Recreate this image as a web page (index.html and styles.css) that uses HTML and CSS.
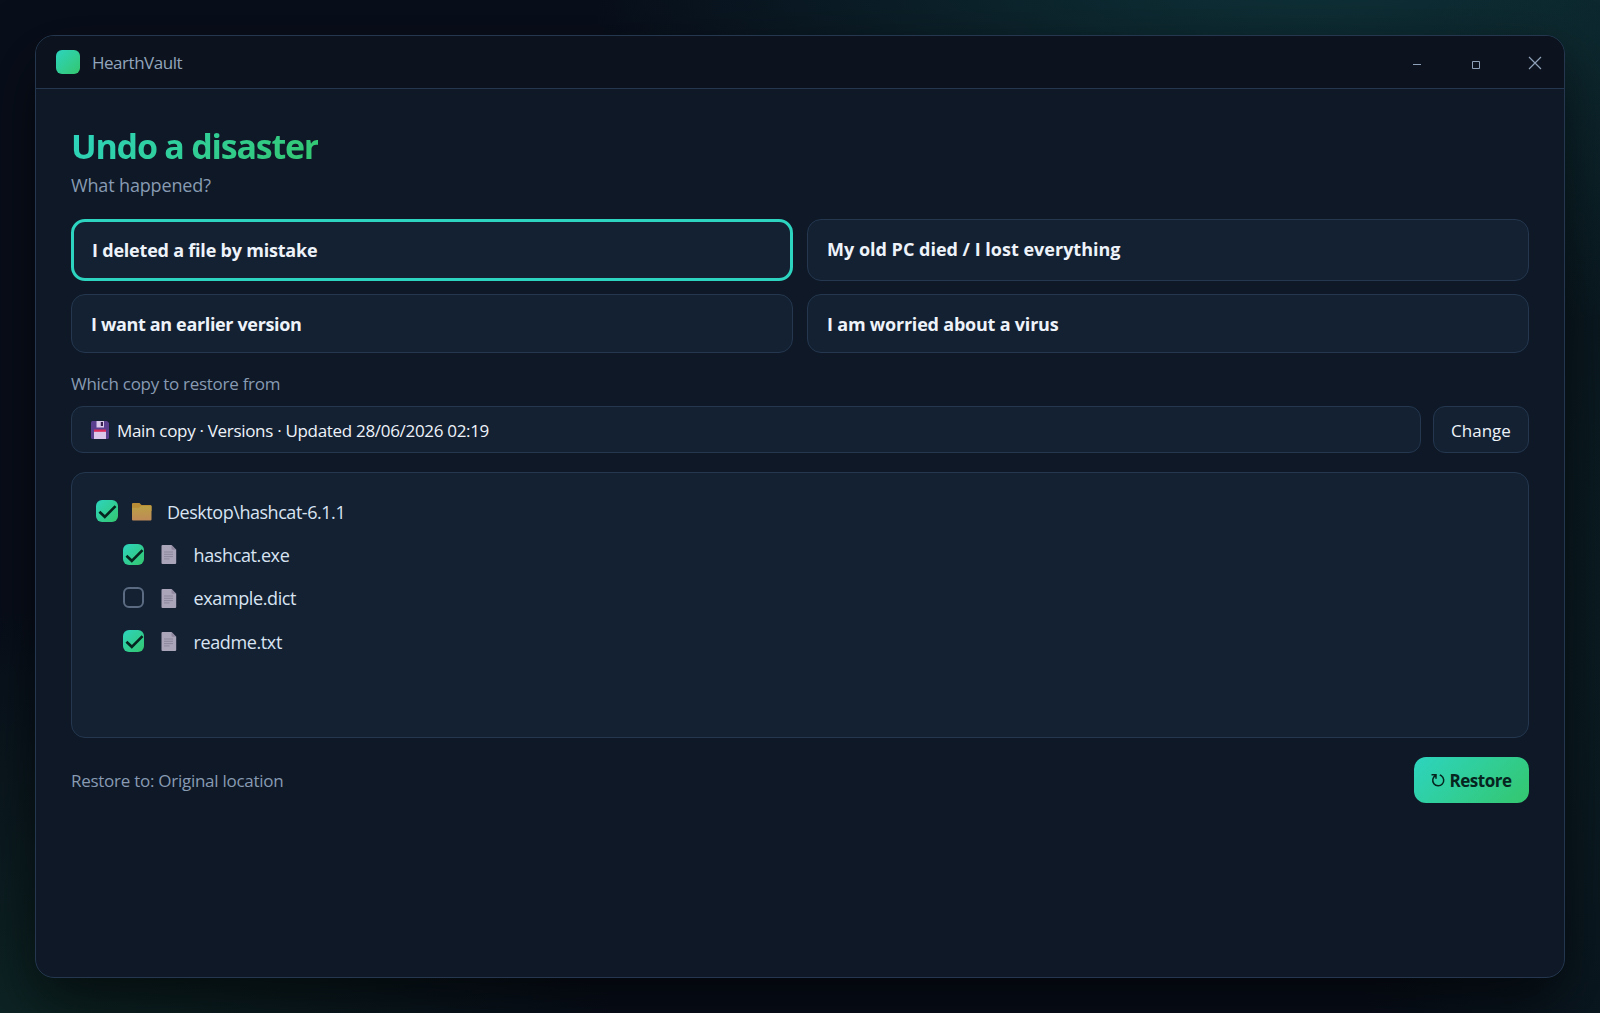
FILE: index.html
```html
<!DOCTYPE html>
<html lang="en">
<head>
    <meta charset="UTF-8">
    <meta name="viewport" content="width=device-width, initial-scale=1.0">
    <title>HearthVault</title>
    <link rel="stylesheet" href="styles.css">
</head>
<body>
    <!-- shared icons -->
    <svg class="sprites" width="0" height="0">
        <linearGradient id="folder-front" x2="0" y2="1">
            <stop offset="0" stop-color="#bba044"/>
            <stop offset="1" stop-color="#be8a58"/>
        </linearGradient>
        <symbol id="tick" viewBox="0 0 22 22">
            <path d="M3.5 12l5.500 5.200L20 6.200" fill="none" stroke="#06251f" stroke-width="2.700"/>
        </symbol>
        <symbol id="page" viewBox="0 0 20 19">
            <path fill="#aba5b9" d="M3.500 0h9l4.700 4.700v13.300q0 1-1 1H3.500q-1 0-1-1V1q0-1 1-1z"/>
            <path fill="#8f889f" d="M12.500 0l4.700 4.700h-3.700q-1 0-1-1z"/>
            <path stroke="#8d879c" d="M5 7h9M5 9.300h9M5 11.600h9M5 13.900h5.500"/>
        </symbol>
    </svg>

    <div class="window">
        <header class="titlebar">
            <div class="logo"></div>
            <span class="app-name">HearthVault</span>
            <div class="window-controls">
                <svg viewBox="0 0 59 52"><path d="M26 28.500h8"/></svg>
                <svg viewBox="0 0 59 52"><path d="M26.500 25.500h7v7h-7z"/></svg>
                <svg viewBox="0 0 59 52"><path d="M24 21l12 12M36 21l-12 12" stroke-width="1.200"/></svg>
            </div>
        </header>

        <main class="content">
            <h1>Undo a disaster</h1>
            <p class="subtitle">What happened?</p>

            <div class="options">
                <div class="option selected">I deleted a file by mistake</div>
                <div class="option lost">My old PC died / I lost everything</div>
                <div class="option earlier">I want an earlier version</div>
                <div class="option">I am worried about a virus</div>
            </div>

            <p class="label">Which copy to restore from</p>
            <div class="source">
                <div class="source-name">
                    <svg class="disk" viewBox="0 0 18 18">
                        <path fill="#5b3f8f" d="M1.500 0H16l2 2v14.500q0 1.500-1.500 1.500h-15Q0 18 0 16.500v-15Q0 0 1.500 0z"/>
                        <path fill="#d9c8ea" d="M5.500 0H13v6.500H5.500z"/>
                        <path fill="#35204f" d="M9.800 1H12v4H9.800z"/>
                        <path fill="#dcc6ea" d="M3 9h12v9H3z"/>
                        <path fill="#dc2c5c" d="M3 8.500h12v2.300H3z"/>
                    </svg>
                    <span>Main copy · Versions · Updated 28/06/2026 02:19</span>
                </div>
                <button class="change">Change</button>
            </div>

            <ul class="files">
                <li class="file folder">
                    <span class="check on"><svg><use href="#tick"/></svg></span>
                    <svg class="icon" viewBox="0 0 20 19">
                        <path fill="#b98d35" d="M1 1h6.500l2 2h9q1 0 1 1v5H0V2q0-1 1-1z"/>
                        <path fill="url(#folder-front)" d="M0 5.800h7l2-1.800h10.500v13.500q0 1-1 1H1q-1 0-1-1z"/>
                    </svg>
                    <span>Desktop\hashcat-6.1.1</span>
                </li>
                <li class="file child">
                    <span class="check on"><svg><use href="#tick"/></svg></span>
                    <svg class="icon"><use href="#page"/></svg>
                    <span>hashcat.exe</span>
                </li>
                <li class="file child">
                    <span class="check"></span>
                    <svg class="icon"><use href="#page"/></svg>
                    <span>example.dict</span>
                </li>
                <li class="file child">
                    <span class="check on"><svg><use href="#tick"/></svg></span>
                    <svg class="icon"><use href="#page"/></svg>
                    <span>readme.txt</span>
                </li>
            </ul>

            <div class="footer">
                <span class="target">Restore to: Original location</span>
                <button class="restore">
                    <svg viewBox="0 0 14 14">
                        <path d="M0.500 1.700h4.500v4M4.600 2.500A5.500 5.500 0 1 0 10.200 2.700L8.800 2" fill="none" stroke="#06251f" stroke-width="1.500"/>
                    </svg>
                    Restore
                </button>
            </div>
        </main>
    </div>
</body>
</html>
```

FILE: styles.css
```css
* {
    box-sizing: border-box;
}

body {
    margin: 0;
    padding: 35px;
    height: 1013px;
    overflow: hidden;
    background:
        radial-gradient(1200px 700px at 82% -8%, rgba(45, 212, 191, 0.2), transparent 62%),
        radial-gradient(900px 700px at 0% 108%, rgba(52, 199, 110, 0.14), transparent 70%),
        radial-gradient(600px 1200px at 108% 60%, rgba(45, 212, 140, 0.1), transparent 70%),
        #080e1a;
    font-family: 'Open Sans', 'Noto Sans', sans-serif;
    color: #eef3fa;
}

.sprites {
    position: absolute;
}

.window {
    width: 1530px;
    height: 943px;
    border: 1px solid #24374f;
    border-radius: 19px;
    background-color: #0e1826;
    box-shadow: 0 24px 60px rgba(0, 0, 0, 0.6);
    overflow: hidden;
}

.titlebar {
    display: flex;
    align-items: center;
    height: 53px;
    padding-left: 20px;
    background-color: #0c131e;
    border-bottom: 1px solid #24374f;
}

.logo {
    width: 24px;
    height: 24px;
    margin-right: 12px;
    border-radius: 6px;
    background: linear-gradient(135deg, #2dd4bf, #34c76e);
}

.app-name {
    padding-top: 1px;
    font-size: 17px;
    letter-spacing: -0.48px;
    color: #93a5bc;
}

.window-controls {
    display: flex;
    margin-left: auto;
}

.window-controls svg {
    width: 59px;
    height: 52px;
    fill: none;
    stroke: #8fa1b9;
}

.content {
    padding: 34px 35px;
}

h1 {
    width: fit-content;
    margin: 0 0 4px;
    font-size: 34px;
    font-weight: 700;
    line-height: 46px;
    letter-spacing: -1.22px;
    background: linear-gradient(135deg, #2dd4bf, #34c76e);
    -webkit-background-clip: text;
    background-clip: text;
    color: transparent;
}

.subtitle {
    margin: 0 0 22px;
    font-size: 18px;
    line-height: 24px;
    letter-spacing: -0.15px;
    color: #889bb3;
}

.options {
    display: grid;
    grid-template-columns: 1fr 1fr;
    grid-template-rows: 61.5px 59px;
    gap: 13.5px 14px;
}

.option {
    display: flex;
    align-items: center;
    padding: 0 19px;
    border: 1px solid #24374f;
    border-radius: 14px;
    background-color: #142132;
    font-size: 18px;
    font-weight: 700;
    letter-spacing: -0.21px;
}

.option.selected {
    padding: 0 18px;
    border: 3px solid #2dd4bf;
}

.option.lost {
    padding-bottom: 2px;
    letter-spacing: 0;
}

.option.earlier {
    letter-spacing: -0.35px;
}

.label {
    margin: 19px 0 10px;
    font-size: 17px;
    line-height: 24px;
    letter-spacing: -0.27px;
    color: #889bb3;
}

.source {
    display: flex;
    gap: 12px;
    height: 47px;
}

.source-name {
    flex: 1;
    display: flex;
    align-items: center;
    padding: 1px 19px 0;
    border: 1px solid #24374f;
    border-radius: 12px;
    background-color: #142132;
    font-size: 17px;
    letter-spacing: -0.31px;
}

.disk {
    width: 18px;
    height: 18px;
    margin-right: 8px;
}

.change {
    width: 96px;
    padding: 1px 0 0;
    border: 1px solid #24374f;
    border-radius: 12px;
    background-color: #142132;
    font-family: inherit;
    font-size: 17px;
    color: #eef3fa;
}

.files {
    height: 266px;
    margin: 19px 0;
    padding: 16.5px 24px;
    border: 1px solid #24374f;
    border-radius: 14px;
    background-color: #142132;
    list-style: none;
}

.file {
    display: flex;
    align-items: center;
    height: 43.3px;
    font-size: 18px;
    letter-spacing: -0.38px;
    color: #d8e4f2;
}

.folder {
    letter-spacing: -0.46px;
}

.file span:last-child {
    padding-top: 1px;
}

.child {
    padding-left: 26.5px;
}

.check {
    width: 21.500px;
    height: 21.500px;
    border: 2px solid #5a6b82;
    border-radius: 6px;
}

.check.on {
    border: none;
    background: linear-gradient(135deg, #2dd4bf, #34c76e);
}

.check svg {
    display: block;
    width: 100%;
    height: 100%;
}

.icon {
    width: 20px;
    height: 19px;
    margin: 1px 15px 0 14.5px;
}

.footer {
    display: flex;
    align-items: center;
    justify-content: space-between;
    height: 46px;
}

.target {
    font-size: 17px;
    letter-spacing: -0.27px;
    color: #889bb3;
}

.restore {
    display: flex;
    align-items: center;
    justify-content: center;
    gap: 4px;
    width: 115px;
    height: 46px;
    padding: 0;
    border: none;
    border-radius: 12px;
    background: linear-gradient(135deg, #2dd4bf, #34c76e);
    font-family: inherit;
    font-size: 17px;
    font-weight: 700;
    letter-spacing: -0.45px;
    color: #06251f;
}

.restore svg {
    width: 14px;
    height: 14px;
}
```
